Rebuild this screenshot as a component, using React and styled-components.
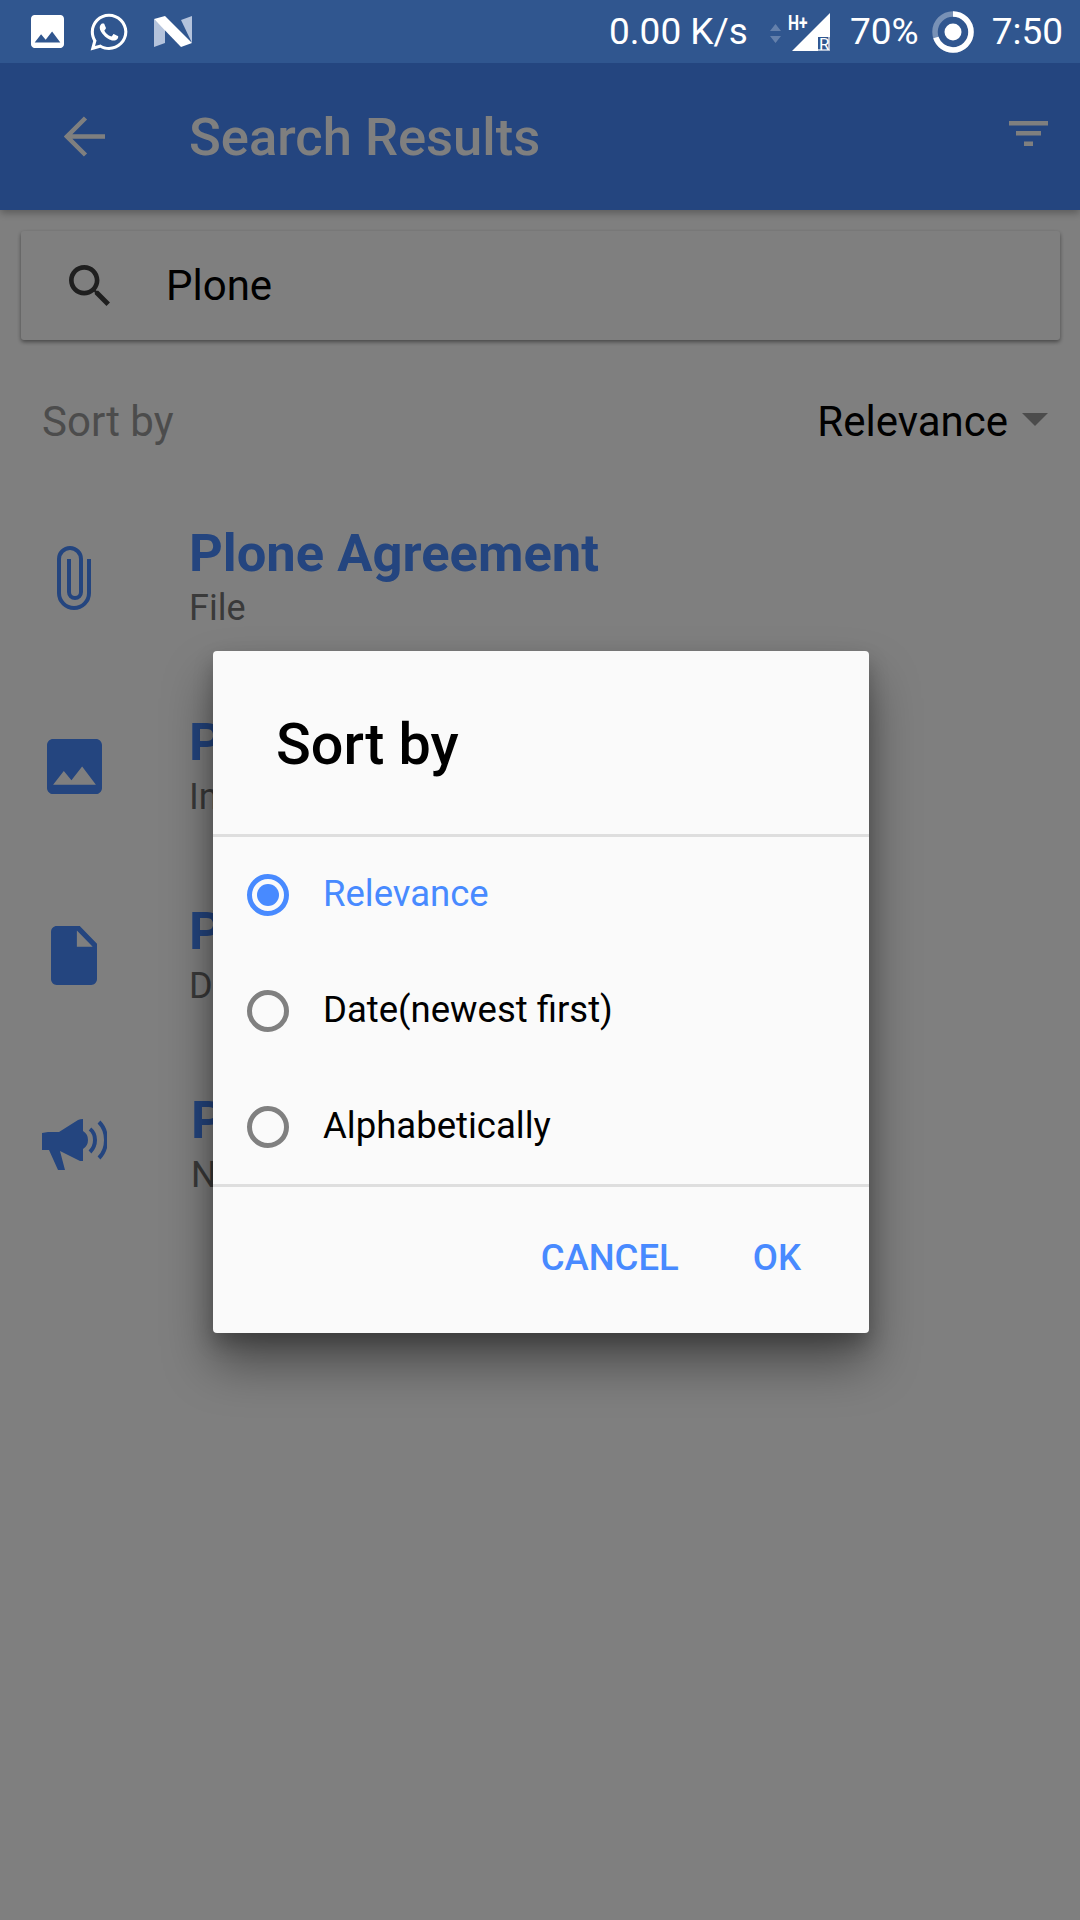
import React from "react";
import styled, { createGlobalStyle } from "styled-components";
import { FaWhatsapp } from "react-icons/fa";

const Global = createGlobalStyle`
  html, body { margin: 0; padding: 0; background: #fff; }
  body { font-family: Roboto, "Liberation Sans", sans-serif; }
  * { box-sizing: border-box; }
`;
const Page = styled.div`
  position: relative; width: 1080px; height: 1920px; overflow: hidden; background: #fff;
  display: flex; flex-direction: column;
`;
const StatusBar = styled.div`
  position: relative; z-index: 3; height: 63px; background: #30568f; color: #fff;
  display: flex; align-items: center; padding: 0 17px 0 31px; flex: none;
`;
const StatusLeft = styled.div`display: flex; align-items: center; gap: 24px;`;
const StatusRight = styled.div`margin-left: auto; display: flex; align-items: center;`;
const StatusText = styled.span`font-size: 37px; line-height: 63px; white-space: nowrap;`;
const Ring = styled.svg`margin: 0 18px 0 13px; flex: none;`;
const SignalBox = styled.div`position: relative; width: 60px; height: 40px; margin: 0 20px 0 22px;`;
const NetArrows = styled.svg`position: absolute; left: 0; top: 12px;`;
const SignalTriangle = styled.svg`position: absolute; left: 22px; top: 1px;`;
const NetType = styled.span`
  position: absolute; left: 18px; top: 1px; font-size: 20px; font-weight: 700; line-height: 1;
  transform: scaleX(.78); transform-origin: left top;
`;
const Roaming = styled.span`position: absolute; left: 49px; top: 24px; font-size: 17px; line-height: 1;`;
const AppBar = styled.header`
  height: 147px; background: #488aff; display: flex; align-items: center; flex: none;
  padding: 0 0 0 64px; color: #fff; box-shadow: 0 3px 8px rgba(0,0,0,.3); position: relative; z-index: 1;
`;
const AppTitle = styled.h1`margin: 2px 0 0 84px; font-size: 52.500px; font-weight: 500; line-height: 147px;`;
const FilterWrap = styled.div`margin-left: auto; margin-right: 32px; margin-bottom: 6px; display: flex;`;
const SearchCard = styled.div`
  margin: 21px 20px 0 21px; height: 109px; background: #fff; border-radius: 3px;
  box-shadow: 0 2px 4px rgba(0,0,0,.45); display: flex; align-items: center; padding: 0 0 0 48px; flex: none;
`;
const SearchIcon = styled.svg`display: block; flex: none;`;
const SearchText = styled.span`margin-left: 56px; font-size: 42px; color: #000;`;
const SortRow = styled.div`
  display: flex; align-items: center; justify-content: space-between; height: 64px; margin-top: 49px;
  padding: 0 32px 0 42px; flex: none;
`;
const SortLabel = styled.span`font-size: 42px; color: #999;`;
const SortValue = styled.span`display: flex; align-items: center; gap: 14px; font-size: 42px; color: #000;`;
const Caret = styled.span`
  width: 0; height: 0; border-left: 13px solid transparent; border-right: 13px solid transparent;
  border-top: 13px solid #999; margin-top: -4px;
`;
const List = styled.div`display: flex; flex-direction: column; margin-top: 30px;`;
const Row = styled.div`display: flex; align-items: center; height: 189px; flex: none;`;
const IconCell = styled.div`width: 189px; display: flex; justify-content: center; padding-right: 41px; flex: none; color: #488aff;`;
const RowBody = styled.div`display: flex; flex-direction: column; margin-top: -5px; padding-left: ${p => p.$nudge || 0}px;`;
const RowTitle = styled.div`font-size: 52.500px; font-weight: 700; color: #488aff; line-height: 56px;`;
const RowSub = styled.div`font-size: 36px; line-height: 36px; margin-top: 9px; color: #757575;`;
const Scrim = styled.div`position: absolute; inset: 0; background: rgba(0,0,0,.5); z-index: 2;`;
const Dialog = styled.div`
  position: absolute; z-index: 4; left: 213px; top: 651px; width: 656px; height: 682px;
  background: #fafafa; border-radius: 4px; display: flex; flex-direction: column;
  box-shadow: 0 30px 50px rgba(0,0,0,.42), 0 10px 20px rgba(0,0,0,.22);
`;
const DialogHead = styled.div`
  height: 186px; padding: 4px 0 0 63px; display: flex; align-items: center; border-bottom: 3px solid #dedede; flex: none;
`;
const DialogTitle = styled.h2`margin: 0; font-size: 57.500px; font-weight: 500; color: #000;`;
const Options = styled.div`height: 350px; display: flex; flex-direction: column; border-bottom: 3px solid #dedede; flex: none;`;
const Option = styled.label`
  display: flex; align-items: center; height: 116px; padding-left: 34px; flex: none;
  font-size: 36.500px; color: ${p => p.$on ? "#488aff" : "#000"};
`;
const OptionText = styled.span`margin-top: -4px;`;
const Radio = styled.span`
  width: 42px; height: 42px; border-radius: 50%; border: 5px solid ${p => p.$on ? "#488aff" : "#808080"};
  display: flex; align-items: center; justify-content: center; margin-right: 34px; flex: none;
  &::after { content: ""; width: 22px; height: 22px; border-radius: 50%; background: ${p => p.$on ? "#488aff" : "transparent"}; }
`;
const Actions = styled.div`flex: 1; display: flex; justify-content: flex-end; align-items: center; padding: 0 68px 6px 0; gap: 74px;`;
const Action = styled.button`
  border: 0; background: none; padding: 0; font: 500 36.500px Roboto, sans-serif; color: #488aff; text-transform: uppercase;
`;

const Picture = ({ size }) => (
  <svg width={size} height={size} viewBox="3 3 18 18" fill="currentColor" style={{ display: "block" }}>
    <path d="M21 19V5c0-1.100-.9-2-2-2H5c-1.100 0-2 .9-2 2v14c0 1.100.9 2 2 2h14c1.100 0 2-.9 2-2zM8.500 13.500l2.500 3.010L14.500 12l4.500 6H5l3.500-4.500z"/>
  </svg>
);
const NLogo = () => (
  <svg width="38" height="31" viewBox="0 0 38 31" style={{ display: "block" }}>
    <path d="M0 3l11 10v14L0 31z" fill="#b4c3dc"/>
    <path d="M27 4l11-4v27z" fill="#b4c3dc"/>
    <path d="M0 3l11-3 27 27-11 4z" fill="#fff"/>
  </svg>
);
const Back = () => (
  <svg width="41" height="41" viewBox="0 0 41 41" fill="none" stroke="#fff" strokeWidth="4.500" style={{ display: "block" }}>
    <path d="M3 20.500H41M21.500 2L3 20.500 21.500 39"/>
  </svg>
);
const Filter = () => (
  <svg width="39" height="25" viewBox="0 0 39 25" fill="#fff" style={{ display: "block" }}>
    <rect width="39" height="4.500"/><rect x="7" y="10" width="25" height="4.500"/><rect x="15" y="20.500" width="9" height="4.500"/>
  </svg>
);
const Clip = () => (
  <svg width="34" height="64" viewBox="0 0 34 64" fill="none" stroke="currentColor" strokeWidth="4" style={{ display: "block" }}>
    <path d="M32 13v34a15 15 0 0 1-30 0V13a11 11 0 0 1 22 0v33a6 6 0 0 1-12 0V13"/>
  </svg>
);
const Doc = () => (
  <svg width="46" height="59" viewBox="4 2 16 20" fill="currentColor" preserveAspectRatio="none" style={{ display: "block" }}>
    <path d="M6 2c-1.100 0-1.990.9-1.990 2L4 20c0 1.100.89 2 1.990 2H18c1.100 0 2-.9 2-2V8l-6-6H6zm7 7V3.500L18.500 9H13z"/>
  </svg>
);
const Horn = () => (
  <svg width="65" height="51" viewBox="0 0 65 51" fill="currentColor" style={{ display: "block" }}>
    <path d="M0 14l6-1h11L36 1q2-1 5-1v12q5 3 5 9t-5 9v12h-3L18 32l5 19h-7L7 31H0z"/>
    <path d="M48 10q5 4 5 11t-5 12M57 3q7 7 7 18t-7 18" fill="none" stroke="currentColor" strokeWidth="4"/>
  </svg>
);

const rows = [
  { icon: <Clip />, t: "Plone Agreement", s: "File" },
  { icon: <Picture size={55} />, t: "P", s: "In" },
  { icon: <Doc />, t: "P", s: "D" },
  { icon: <Horn />, t: "P", s: "N", nudge: 2 },
];
const options = ["Relevance", "Date(newest first)", "Alphabetically"];

export default function App() {
  return (
    <Page>
      <Global />
      <StatusBar>
        <StatusLeft>
          <Picture size={33} />
          <FaWhatsapp size={42} color="#fff" />
          <NLogo />
        </StatusLeft>
        <StatusRight>
          <StatusText>0.00 K/s</StatusText>
          <SignalBox>
            <NetArrows width="11" height="19" viewBox="0 0 11 19" fill="#fff" opacity=".25">
              <path d="M5.500 0L11 7H0zM0 12h11l-5.500 7z"/>
            </NetArrows>
            <NetType>H+</NetType>
            <SignalTriangle width="38" height="38" viewBox="0 0 38 38" fill="#fff">
              <path d="M38 0v24H26v14H0z"/>
              <path d="M26 36h12v2H26zM36 24h2v12h-2z" opacity=".6"/>
            </SignalTriangle>
            <Roaming>R</Roaming>
          </SignalBox>
          <StatusText>70%</StatusText>
          <Ring width="42" height="42" viewBox="0 0 42 42">
            <circle cx="21" cy="21" r="18" fill="none" stroke="#fff" strokeOpacity=".35" strokeWidth="5.500"/>
            <circle cx="21" cy="21" r="18" fill="none" stroke="#fff" strokeWidth="5.500" pathLength="100" strokeDasharray="70 30" transform="rotate(-90 21 21)"/>
            <circle cx="21" cy="21" r="8.500" fill="#fff"/>
          </Ring>
          <StatusText>7:50</StatusText>
        </StatusRight>
      </StatusBar>
      <AppBar>
        <Back />
        <AppTitle>Search Results</AppTitle>
        <FilterWrap><Filter /></FilterWrap>
      </AppBar>
      <SearchCard>
        <SearchIcon width="41" height="41" viewBox="3 3 17.500 17.500" fill="#000" opacity=".75">
          <path d="M15.500 14h-.79l-.28-.27C15.410 12.590 16 11.110 16 9.500 16 5.910 13.090 3 9.500 3S3 5.910 3 9.500 5.910 16 9.500 16c1.610 0 3.090-.59 4.230-1.570l.27.28v.79l5 4.990L20.490 19l-4.990-5zm-6 0C7.010 14 5 11.990 5 9.500S7.010 5 9.500 5 14 7.010 14 9.500 11.990 14 9.500 14z"/>
        </SearchIcon>
        <SearchText>Plone</SearchText>
      </SearchCard>
      <SortRow>
        <SortLabel>Sort by</SortLabel>
        <SortValue>Relevance<Caret /></SortValue>
      </SortRow>
      <List>
        {rows.map((r, i) => (
          <Row key={i}>
            <IconCell>{r.icon}</IconCell>
            <RowBody $nudge={r.nudge}>
              <RowTitle>{r.t}</RowTitle>
              <RowSub>{r.s}</RowSub>
            </RowBody>
          </Row>
        ))}
      </List>
      <Scrim />
      <Dialog>
        <DialogHead><DialogTitle>Sort by</DialogTitle></DialogHead>
        <Options>
          {options.map((o, i) => (
            <Option key={o} $on={i === 0}><Radio $on={i === 0} /><OptionText>{o}</OptionText></Option>
          ))}
        </Options>
        <Actions>
          <Action>Cancel</Action>
          <Action>OK</Action>
        </Actions>
      </Dialog>
    </Page>
  );
}
